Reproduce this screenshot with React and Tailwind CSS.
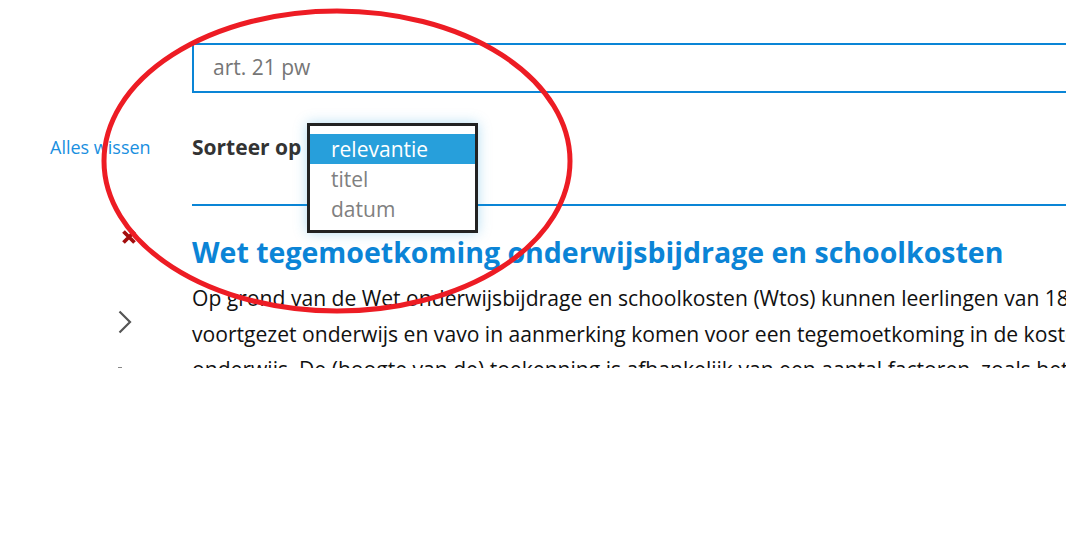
import React from "react";

export default function App() {
  return (
    <div className="relative w-[1066px] h-[540px] bg-white overflow-hidden font-['Open_Sans',sans-serif]">
      <div className="flex h-[368px] overflow-hidden">
        {/* left column */}
        <aside className="w-[192px] shrink-0 flex flex-col">
          <div className="pt-[134px] pl-[50px] text-[18px] leading-[26px] text-[#1a8fe0]">Alles wissen</div>
          <div className="mt-[69px] pl-[121px] h-[16px] flex items-center">
            <svg width="16" height="16" viewBox="0 0 16 16">
              <path d="M2.5 2.5 L13.5 13.5 M13.5 2.5 L2.5 13.5" stroke="#a30d0d" strokeWidth="3.8" strokeLinecap="butt" />
            </svg>
          </div>
          <div className="mt-[65px] pl-[117px] h-[24px] flex items-center">
            <svg width="16" height="24" viewBox="0 0 16 24">
              <path d="M2.5 1.5 L13 12 L2.5 22.5" fill="none" stroke="#555" strokeWidth="2.2" />
            </svg>
          </div>
          <div className="mt-[33px] pl-[118px]">
            <div className="w-[4px] h-[2px] bg-[#888]"></div>
          </div>
        </aside>

        {/* main column */}
        <main className="w-[1000px] shrink-0 pt-[43px]">
          <div className="h-[50px] border-2 border-[#0a85d6] flex items-center pl-[19px] text-[21px] text-[#767676]">
            art. 21 pw
          </div>
          <div className="relative h-[113px] border-b-2 border-[#0a85d6]">
            <div className="pt-[40px] text-[21px] leading-[28px] font-bold text-[#333]">Sorteer op</div>
            <div className="absolute left-[115px] top-[30px] w-[171px] h-[110px] border-[3px] border-[#222] bg-white shadow-[0_0_12px_rgba(39,159,219,0.35)] pt-[8px] text-[21px] leading-[30px] text-[#808080]">
              <div className="bg-[#279fdb] text-white pl-[21px] h-[30px]">relevantie</div>
              <div className="pl-[21px] h-[30px]">titel</div>
              <div className="pl-[21px] h-[30px]">datum</div>
            </div>
          </div>
          <h2 className="mt-[27px] text-[28.5px] leading-[38px] font-bold text-[#0b84d6] whitespace-nowrap">
            Wet tegemoetkoming onderwijsbijdrage en schoolkosten
          </h2>
          <div className="mt-[9px] text-[21.1px] leading-[35.5px] text-[#111] whitespace-nowrap">
            <div>Op grond van de Wet onderwijsbijdrage en schoolkosten (Wtos) kunnen leerlingen van 18 jaar</div>
            <div>voortgezet onderwijs en vavo in aanmerking komen voor een tegemoetkoming in de kosten</div>
            <div>onderwijs. De (hoogte van de) toekenning is afhankelijk van een aantal factoren, zoals het</div>
          </div>
        </main>
      </div>

      <svg className="absolute left-0 top-0 pointer-events-none" width="1066" height="540">
        <ellipse cx="337" cy="161" rx="233" ry="150" fill="none" stroke="#ed1c24" strokeWidth="5" />
      </svg>
    </div>
  );
}
